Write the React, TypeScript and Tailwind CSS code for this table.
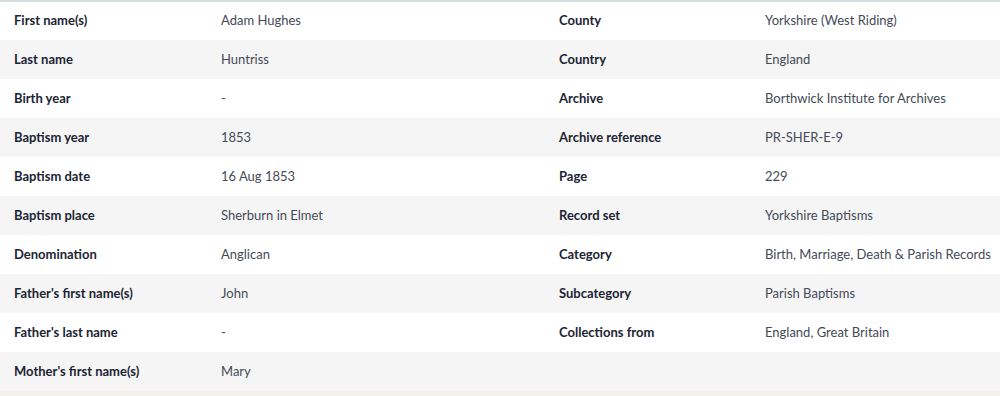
const ROWS: [string, string, string?, string?][] = [
  ["First name(s)", "Adam Hughes", "County", "Yorkshire (West Riding)"],
  ["Last name", "Huntriss", "Country", "England"],
  ["Birth year", "-", "Archive", "Borthwick Institute for Archives"],
  ["Baptism year", "1853", "Archive reference", "PR-SHER-E-9"],
  ["Baptism date", "16 Aug 1853", "Page", "229"],
  ["Baptism place", "Sherburn in Elmet", "Record set", "Yorkshire Baptisms"],
  ["Denomination", "Anglican", "Category", "Birth, Marriage, Death & Parish Records"],
  ["Father's first name(s)", "John", "Subcategory", "Parish Baptisms"],
  ["Father's last name", "-", "Collections from", "England, Great Britain"],
  ["Mother's first name(s)", "Mary"],
]

export default function App() {
  return (
    <div className="w-[1000px] h-[396px] bg-[#f1f0eb] overflow-hidden font-['Lato',sans-serif] text-[13px]">
      <div className="border-t-2 border-[#d3dcde]">
        {ROWS.map(([l1, v1, l2, v2], i) => (
          <div
            key={l1}
            className={`grid grid-cols-[221px_324px_220px_235px] items-center ${i === 0 ? "h-[38px]" : "h-[39px]"} ${i % 2 === 1 ? "bg-[#f5f5f5]" : "bg-white"}`}
          >
            <span className="pl-[14px] font-bold text-[#1c2434]">{l1}</span>
            <span className="text-[#454a56]">{v1}</span>
            <span className="pl-[14px] font-bold text-[#1c2434]">{l2}</span>
            <span className="text-[#454a56] whitespace-nowrap">{v2}</span>
          </div>
        ))}
      </div>
    </div>
  )
}
